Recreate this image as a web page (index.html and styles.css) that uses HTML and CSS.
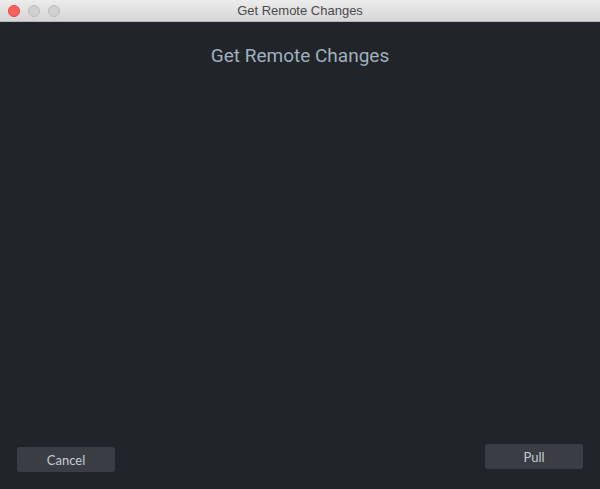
FILE: index.html
```html
<!DOCTYPE html>
<html>
<head>
<meta charset="utf-8">
<link rel="stylesheet" href="styles.css">
</head>
<body>
<div class="window">
  <div class="titlebar">
    <div class="lights">
      <span class="light close"></span>
      <span class="light min"></span>
      <span class="light max"></span>
    </div>
    <div class="wtitle">Get Remote Changes</div>
  </div>
  <div class="content">
    <h1 class="heading">Get Remote Changes</h1>
    <div class="spacer"></div>
    <div class="actions">
      <button class="btn cancel">Cancel</button>
      <button class="btn pull">Pull</button>
    </div>
  </div>
</div>
</body>
</html>
```
FILE: styles.css
```css
html, body {
  margin: 0;
  padding: 0;
  width: 600px;
  height: 489px;
  overflow: hidden;
  background: #212429;
}
.window {
  display: flex;
  flex-direction: column;
  width: 600px;
  height: 489px;
}
.titlebar {
  position: relative;
  height: 21px;
  flex: none;
  background: linear-gradient(#ececec, #d6d6d6);
  border-bottom: 1px solid #b9b9b9;
  display: flex;
  align-items: center;
  justify-content: center;
}
.lights {
  position: absolute;
  left: 8px;
  top: 5px;
  display: flex;
  gap: 8px;
}
.light {
  width: 12px;
  height: 12px;
  border-radius: 50%;
  box-sizing: border-box;
}
.close {
  background: #fc605c;
  border: 0.5px solid #de4a46;
}
.min, .max {
  background: #d0d0d0;
  border: 0.5px solid #bcbcbc;
}
.wtitle {
  font-family: "Liberation Sans", Arial, sans-serif;
  font-size: 13px;
  color: #4a4a4a;
  line-height: 21px;
}
.content {
  flex: 1;
  display: flex;
  flex-direction: column;
  padding: 0 17px 17px 17px;
}
.heading {
  margin: 22px 0 0 0;
  text-align: center;
  font-family: Roboto, "Liberation Sans", sans-serif;
  font-weight: 400;
  font-size: 19px;
  line-height: 24px;
  color: #9fb0bf;
}
.spacer {
  flex: 1;
}
.actions {
  display: flex;
  justify-content: space-between;
  align-items: flex-end;
}
.btn {
  width: 98px;
  height: 25px;
  border: none;
  border-radius: 3px;
  background: #3a3d43;
  color: #c3ccd6;
  font-family: Lato, "Open Sans", sans-serif;
  font-size: 13px;
  padding: 0;
}
.pull {
  margin-bottom: 3px;
}
```
